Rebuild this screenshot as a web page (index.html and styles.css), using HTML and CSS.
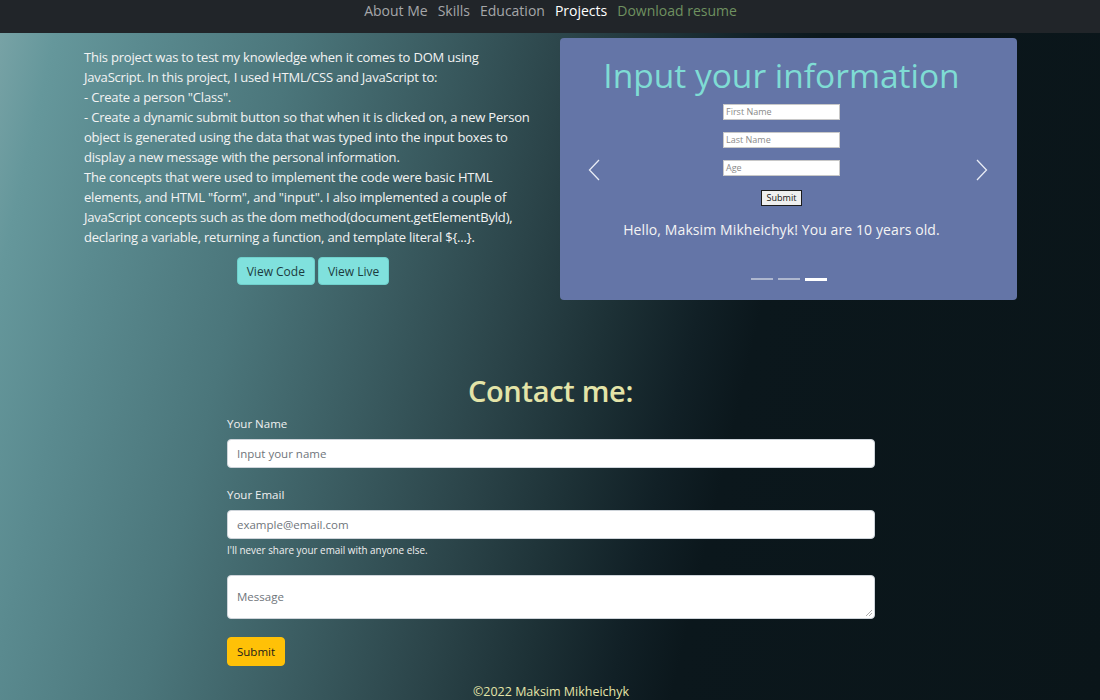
FILE: index.html
```html
<!DOCTYPE html>
<html>
<head>
<meta charset="utf-8">
<link rel="stylesheet" href="styles.css">
</head>
<body>
<nav class="navbar">
  <a class="nav-link">About Me</a>
  <a class="nav-link">Skills</a>
  <a class="nav-link">Education</a>
  <a class="nav-link active">Projects</a>
  <a class="nav-link resume">Download resume</a>
</nav>
<main class="page">
  <section class="project">
    <div class="project-text">
      <p class="desc">This project was to test my knowledge when it comes to DOM using JavaScript. In this project, I used HTML/CSS and JavaScript to:<br>- Create a person "Class".<br>- Create a dynamic submit button so that when it is clicked on, a new Person object is generated using the data that was typed into the input boxes to display a new message with the personal information.<br>The concepts that were used to implement the code were basic HTML elements, and HTML "form", and "input". I also implemented a couple of JavaScript concepts such as the dom method(document.getElementByld), declaring a variable, returning a function, and template literal ${...}.</p>
      <div class="btns">
        <button class="btn-teal">View Code</button>
        <button class="btn-teal">View Live</button>
      </div>
    </div>
    <div class="carousel">
      <div class="slide">
        <h2 class="slide-title">Input your information</h2>
        <div class="mini-input">First Name</div>
        <div class="mini-input">Last Name</div>
        <div class="mini-input">Age</div>
        <div class="mini-submit">Submit</div>
        <p class="hello">Hello, Maksim Mikheichyk! You are 10 years old.</p>
      </div>
      <span class="arrow prev"><svg width="12" height="22" viewBox="0 0 12 22"><path d="M11 1 L1.5 11 L11 21" fill="none" stroke="#e8ecf5" stroke-width="1.3"/></svg></span>
      <span class="arrow next"><svg width="12" height="22" viewBox="0 0 12 22"><path d="M1 1 L10.5 11 L1 21" fill="none" stroke="#e8ecf5" stroke-width="1.3"/></svg></span>
      <div class="indicators"><i></i><i></i><i class="on"></i></div>
    </div>
  </section>
  <section class="contact">
    <h1 class="contact-title">Contact me:</h1>
    <div class="form">
      <label class="lbl">Your Name</label>
      <div class="field">Input your name</div>
      <label class="lbl second">Your Email</label>
      <div class="field">example@email.com</div>
      <div class="help">I'll never share your email with anyone else.</div>
      <div class="field area">Message<svg class="grip" width="8" height="8" viewBox="0 0 8 8"><path d="M7 1 L1 7 M7 4 L4 7" stroke="#999" stroke-width="0.8"/></svg></div>
      <button class="btn-yellow">Submit</button>
    </div>
  </section>
  <footer class="footer">©2022 Maksim Mikheichyk</footer>
</main>
</body>
</html>
```
FILE: styles.css
```css
* { box-sizing: border-box; }
html, body { margin: 0; padding: 0; }
body {
  width: 1100px;
  height: 700px;
  overflow: hidden;
  font-family: "Open Sans", "Noto Sans", sans-serif;
  background: linear-gradient(103deg, #7aa4a7 0%, #65979b 5%, #5a8a8f 12%, #4b767b 24%, #3a5b60 36%, #2b4449 46%, #1d3136 54%, #112026 61%, #0b171c 66%, #0a1519 100%);
  color: #f2f2f2;
}
.navbar {
  height: 33px;
  background: #212529;
  display: flex;
  justify-content: center;
  align-items: flex-start;
  gap: 10px;
  padding-top: 1px;
  padding-left: 1px;
  font-size: 14px;
}
.nav-link { color: #a5a7a9; line-height: 20px; }
.nav-link.active { color: #ffffff; }
.nav-link.resume { color: #6f9160; }
.page { display: flex; flex-direction: column; }
.project {
  display: flex;
  align-items: flex-start;
  padding: 5px 0 0 84px;
  gap: 24px;
}
.project-text { width: 452px; padding-top: 9px; }
.desc {
  margin: 0;
  font-size: 13px;
  line-height: 20px;
  letter-spacing: -0.2px;
  color: #f3f3f3;
}
.btns {
  display: flex;
  justify-content: center;
  gap: 3px;
  margin-top: 10px;
  padding-left: 6px;
}
.btn-teal {
  background: #80e1dd;
  border: 1px solid #6fd0cc;
  border-radius: 4px;
  height: 28px;
  padding: 0 9px;
  font-family: inherit;
  font-size: 12px;
  color: #1c3b3d;
}
.carousel {
  position: relative;
  width: 457px;
  height: 262px;
  background: #6475a7;
  border-radius: 4px;
}
.slide {
  display: flex;
  flex-direction: column;
  align-items: center;
  padding-top: 15px;
  padding-right: 14px;
}
.slide-title {
  margin: 0;
  font-weight: 400;
  font-size: 33.5px;
  line-height: 44px;
  color: #7fdcd4;
}
.mini-input {
  width: 117px;
  height: 16px;
  background: #fff;
  border: 1px solid #c8c8c8;
  font-size: 9px;
  line-height: 14px;
  color: #8a8a8a;
  padding-left: 2px;
  margin-top: 12px;
}
.mini-input:first-of-type { margin-top: 7px; }
.mini-submit {
  margin-top: 14px;
  width: 41px;
  height: 16px;
  border: 1px solid #1b1b1b;
  background: #efefef;
  font-size: 9px;
  line-height: 14px;
  text-align: center;
  color: #111;
}
.hello {
  margin: 14px 0 0;
  font-size: 14px;
  color: #f4f4f4;
  letter-spacing: 0.1px;
}
.arrow { position: absolute; top: 121px; }
.arrow.prev { left: 28px; }
.arrow.next { right: 29px; }
.indicators {
  position: absolute;
  left: 191px;
  top: 240px;
  display: flex;
  gap: 5px;
}
.indicators i {
  width: 22px;
  height: 2px;
  background: #aeb7cf;
}
.indicators i.on { background: #ffffff; height: 3px; }
.contact {
  display: flex;
  flex-direction: column;
  align-items: center;
  margin-top: 77px;
}
.contact-title {
  margin: 0 0 11px;
  font-size: 29px;
  line-height: 28px;
  font-weight: 600;
  color: #e4e4a8;
  letter-spacing: -0.3px;
  padding-left: 1px;
}
.form { width: 648px; display: flex; flex-direction: column; align-items: flex-start; padding-left: 1px; }
.lbl { font-size: 11.5px; line-height: 16px; margin-top: 0; color: #f0f0f0; }
.lbl.second { margin-top: 19px; }
.field {
  position: relative;
  width: 648px;
  height: 29px;
  margin-top: 7px;
  background: #fff;
  border: 1px solid #ced4da;
  border-radius: 4px;
  font-size: 11.5px;
  line-height: 27px;
  padding-left: 9px;
  color: #6f757b;
}
.field.area { height: 44px; line-height: 42px; margin-top: 18px; }
.grip { position: absolute; right: 1px; bottom: 1px; }
.help { font-size: 9.9px; line-height: 14px; margin-top: 4px; color: #f0f0f0; }
.btn-yellow {
  margin-top: 18px;
  background: #ffc107;
  border: 1px solid #ffc107;
  border-radius: 4px;
  height: 29px;
  padding: 0 9px;
  font-family: inherit;
  font-size: 11.5px;
  color: #1a1a1a;
}
.footer {
  text-align: center;
  margin-top: 18px;
  font-size: 12.5px;
  line-height: 16px;
  color: #e4e4a8;
  padding-left: 2px;
}
```
